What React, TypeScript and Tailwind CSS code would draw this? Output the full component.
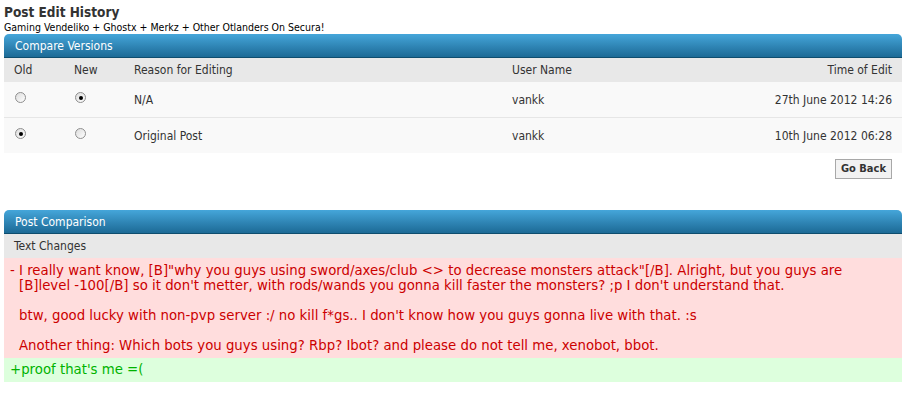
import React from "react";

const ui = { fontFamily: '"DejaVu Sans Condensed", "DejaVu Sans", sans-serif' };
const verdana = { fontFamily: '"DejaVu Sans", Verdana, sans-serif' };

function Radio({ checked }: { checked?: boolean }) {
  return (
    <span className="relative top-[-2px] inline-flex h-[11px] w-[11px] items-center justify-center rounded-full border border-[#8f8f8f] bg-gradient-to-br from-[#dcdcdc] to-[#ffffff]">
      {checked && <span className="h-[4px] w-[4px] rounded-full bg-black" />}
    </span>
  );
}

function PanelHeader({ title }: { title: string }) {
  return (
    <div className="flex h-[24px] items-center rounded-t-[5px] border-b border-[#0e4d6e] bg-gradient-to-b from-[#45a6da] to-[#1c6a96] pl-[11px] text-[12px] text-white">
      {title}
    </div>
  );
}

export default function App() {
  return (
    <div className="min-h-[393px] w-[908px] bg-white text-[#333]" style={ui}>
      <div className="px-[4px] pt-[3px]">
        <div className="text-[13.5px] font-bold leading-[18px] text-[#333]">Post Edit History</div>
        <div className="text-[10.5px] leading-[12px] text-black">
          Gaming Vendeliko + Ghostx + Merkz + Other Otlanders On Secura!
        </div>
      </div>

      <div className="mx-[4px] mt-[1px] w-[898px]">
        <PanelHeader title="Compare Versions" />
        <div className="flex h-[24px] items-center bg-[#e8e8e8] text-[12px]">
          <div className="w-[70px] pl-[10px]">Old</div>
          <div className="w-[60px]">New</div>
          <div className="w-[378px]">Reason for Editing</div>
          <div className="flex-1">User Name</div>
          <div className="pr-[10px]">Time of Edit</div>
        </div>
        <div className="flex h-[36px] items-center border-b border-[#e6e6e6] bg-[#f9f9f9] text-[12px]">
          <div className="flex w-[70px] pl-[11px]">
            <Radio />
          </div>
          <div className="flex w-[60px] pl-[1px]">
            <Radio checked />
          </div>
          <div className="w-[378px]">N/A</div>
          <div className="flex-1">vankk</div>
          <div className="pr-[10px]">27th June 2012 14:26</div>
        </div>
        <div className="flex h-[35px] items-center bg-[#f9f9f9] text-[12px]">
          <div className="flex w-[70px] pl-[11px]">
            <Radio checked />
          </div>
          <div className="flex w-[60px] pl-[1px]">
            <Radio />
          </div>
          <div className="w-[378px]">Original Post</div>
          <div className="flex-1">vankk</div>
          <div className="pr-[10px]">10th June 2012 06:28</div>
        </div>
        <div className="flex justify-end pr-[10px] pt-[6px]">
          <button className="h-[20px] border border-[#a8a8a8] bg-[#f2f2f2] px-[5px] text-[11px] font-bold text-[#333]">
            Go Back
          </button>
        </div>
      </div>

      <div className="mx-[4px] mt-[31px] w-[898px]">
        <PanelHeader title="Post Comparison" />
        <div className="flex h-[24px] items-center bg-[#e8e8e8] pl-[10px] text-[12px]">Text Changes</div>
        <div className="flex bg-[#ffdddd] pb-[5px] pl-[6px] pt-[5px] text-[13.3px] leading-[15px] text-[#cc0000]" style={verdana}>
          <span className="w-[9px] shrink-0">-</span>
          <div className="whitespace-pre-wrap">
            {`I really want know, [B]"why you guys using sword/axes/club <> to decrease monsters attack"[/B]. Alright, but you guys are
[B]level -100[/B] so it don't metter, with rods/wands you gonna kill faster the monsters? ;p I don't understand that.

btw, good lucky with non-pvp server :/ no kill f*gs.. I don't know how you guys gonna live with that. :s

Another thing: Which bots you guys using? Rbp? Ibot? and please do not tell me, xenobot, bbot.`}
          </div>
        </div>
        <div className="flex h-[24px] items-center bg-[#ddffdd] pl-[6px] text-[13.3px] text-[#00b300]" style={verdana}>
          +proof that's me =(
        </div>
      </div>
    </div>
  );
}
